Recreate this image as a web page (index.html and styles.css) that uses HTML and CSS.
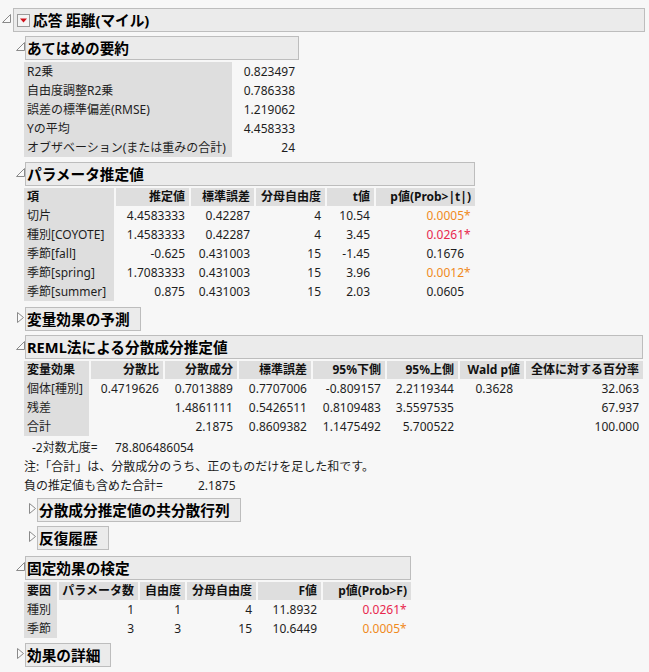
FILE: index.html
```html
<!DOCTYPE html>
<html lang="ja">
<head>
<meta charset="utf-8">
<title>応答 距離(マイル)</title>
<link rel="stylesheet" href="styles.css">
</head>
<body>
<div class="report">
  <section class="node root">
    <span class="tri tri-root"><svg width="9" height="9" viewBox="0 0 9 9"><path d="M0.5 8.5 L8.5 0.5 L8.5 8.5 Z" fill="#fafafa" stroke="#8a8a8a"/></svg></span>
    <div class="title root-title"><span class="menu"><svg width="13" height="13" viewBox="0 0 13 13"><rect x="0.5" y="0.5" width="12" height="12" fill="#f4f4f4" stroke="#9a9a9a"/><path d="M3 4.5 L10 4.5 L6.5 8.5 Z" fill="#d0101a"/></svg></span>応答 距離(マイル)</div>
    <div class="body">

      <section class="node mt4">
        <span class="tri"><svg width="9" height="9" viewBox="0 0 9 9"><path d="M0.5 8.5 L8.5 0.5 L8.5 8.5 Z" fill="#fafafa" stroke="#8a8a8a"/></svg></span>
        <div class="title">あてはめの要約</div>
        <div class="body">
          <div class="grid summary">
            <div class="lab">R2乗</div><div class="num">0.823497</div>
            <div class="lab">自由度調整R2乗</div><div class="num">0.786338</div>
            <div class="lab">誤差の標準偏差(RMSE)</div><div class="num">1.219062</div>
            <div class="lab">Yの平均</div><div class="num">4.458333</div>
            <div class="lab">オブザベーション(または重みの合計)</div><div class="num">24</div>
          </div>
        </div>
      </section>

      <section class="node mt5">
        <span class="tri"><svg width="9" height="9" viewBox="0 0 9 9"><path d="M0.5 8.5 L8.5 0.5 L8.5 8.5 Z" fill="#fafafa" stroke="#8a8a8a"/></svg></span>
        <div class="title">パラメータ推定値</div>
        <div class="body">
          <div class="grid param">
            <div class="hd left">項</div><div class="hd">推定値</div><div class="hd">標準誤差</div><div class="hd">分母自由度</div><div class="hd">t値</div><div class="hd">p値(Prob&gt;|t|)</div>
            <div class="lab">切片</div><div class="num">4.4583333</div><div class="num">0.42287</div><div class="num">4</div><div class="num">10.54</div><div class="num pv orange">0.0005<span class="star">*</span></div>
            <div class="lab">種別[COYOTE]</div><div class="num">1.4583333</div><div class="num">0.42287</div><div class="num">4</div><div class="num">3.45</div><div class="num pv red">0.0261<span class="star">*</span></div>
            <div class="lab">季節[fall]</div><div class="num">-0.625</div><div class="num">0.431003</div><div class="num">15</div><div class="num">-1.45</div><div class="num pv">0.1676<span class="star"></span></div>
            <div class="lab">季節[spring]</div><div class="num">1.7083333</div><div class="num">0.431003</div><div class="num">15</div><div class="num">3.96</div><div class="num pv orange">0.0012<span class="star">*</span></div>
            <div class="lab">季節[summer]</div><div class="num">0.875</div><div class="num">0.431003</div><div class="num">15</div><div class="num">2.03</div><div class="num pv">0.0605<span class="star"></span></div>
          </div>
        </div>
      </section>

      <section class="node mt6">
        <span class="tri tri-closed"><svg width="7" height="11" viewBox="0 0 7 11"><path d="M0.5 0.5 L6.5 5.5 L0.5 10.5 Z" fill="#fafafa" stroke="#8a8a8a"/></svg></span>
        <div class="title">変量効果の予測</div>
      </section>

      <section class="node mt4">
        <span class="tri"><svg width="9" height="9" viewBox="0 0 9 9"><path d="M0.5 8.5 L8.5 0.5 L8.5 8.5 Z" fill="#fafafa" stroke="#8a8a8a"/></svg></span>
        <div class="title">REML法による分散成分推定値</div>
        <div class="body">
          <div class="grid reml">
            <div class="hd left">変量効果</div><div class="hd">分散比</div><div class="hd">分散成分</div><div class="hd">標準誤差</div><div class="hd">95%下側</div><div class="hd">95%上側</div><div class="hd">Wald p値</div><div class="hd">全体に対する百分率</div>
            <div class="lab">個体[種別]</div><div class="num">0.4719626</div><div class="num">0.7013889</div><div class="num">0.7707006</div><div class="num">-0.809157</div><div class="num">2.2119344</div><div class="num pv">0.3628<span class="star"></span></div><div class="num">32.063</div>
            <div class="lab">残差</div><div class="num"></div><div class="num">1.4861111</div><div class="num">0.5426511</div><div class="num">0.8109483</div><div class="num">3.5597535</div><div class="num"></div><div class="num">67.937</div>
            <div class="lab">合計</div><div class="num"></div><div class="num">2.1875</div><div class="num">0.8609382</div><div class="num">1.1475492</div><div class="num">5.700522</div><div class="num"></div><div class="num">100.000</div>
          </div>
          <div class="line loglik"><span class="ll-label">-2対数尤度=</span><span>78.806486054</span></div>
          <div class="line">注:「合計」は、分散成分のうち、正のものだけを足した和です。</div>
          <div class="line"><span class="neg-label">負の推定値も含めた合計=</span><span>2.1875</span></div>

          <section class="node mt3">
            <span class="tri tri-closed"><svg width="7" height="11" viewBox="0 0 7 11"><path d="M0.5 0.5 L6.5 5.5 L0.5 10.5 Z" fill="#fafafa" stroke="#8a8a8a"/></svg></span>
            <div class="title">分散成分推定値の共分散行列</div>
          </section>
          <section class="node mt4">
            <span class="tri tri-closed"><svg width="7" height="11" viewBox="0 0 7 11"><path d="M0.5 0.5 L6.5 5.5 L0.5 10.5 Z" fill="#fafafa" stroke="#8a8a8a"/></svg></span>
            <div class="title">反復履歴</div>
          </section>
        </div>
      </section>

      <section class="node mt6">
        <span class="tri"><svg width="9" height="9" viewBox="0 0 9 9"><path d="M0.5 8.5 L8.5 0.5 L8.5 8.5 Z" fill="#fafafa" stroke="#8a8a8a"/></svg></span>
        <div class="title">固定効果の検定</div>
        <div class="body">
          <div class="grid fixed">
            <div class="hd left">要因</div><div class="hd">パラメータ数</div><div class="hd">自由度</div><div class="hd">分母自由度</div><div class="hd">F値</div><div class="hd">p値(Prob&gt;F)</div>
            <div class="lab">種別</div><div class="num">1</div><div class="num">1</div><div class="num">4</div><div class="num">11.8932</div><div class="num pv red">0.0261<span class="star">*</span></div>
            <div class="lab">季節</div><div class="num">3</div><div class="num">3</div><div class="num">15</div><div class="num">10.6449</div><div class="num pv orange">0.0005<span class="star">*</span></div>
          </div>
        </div>
      </section>

      <section class="node mt5">
        <span class="tri tri-closed"><svg width="7" height="11" viewBox="0 0 7 11"><path d="M0.5 0.5 L6.5 5.5 L0.5 10.5 Z" fill="#fafafa" stroke="#8a8a8a"/></svg></span>
        <div class="title">効果の詳細</div>
      </section>

    </div>
  </section>
</div>
</body>
</html>
```

FILE: styles.css
```css
html, body {
  margin: 0;
  background: #f7f7f7;
}
body {
  font-family: "Noto Sans", "Noto Sans CJK JP", sans-serif;
  font-size: 12px;
  color: #1e1e1e;
}
.report {
  padding-top: 8px;
}
.node {
  display: grid;
  grid-template-columns: 13px max-content;
  align-items: start;
}
.root {
  grid-template-columns: 13px 632px;
}
.mt3 { margin-top: 3px; }
.mt4 { margin-top: 4px; }
.mt5 { margin-top: 5px; }
.mt6 { margin-top: 6px; }

.tri {
  grid-column: 1;
  grid-row: 1;
  display: flex;
  padding-left: 4px;
  padding-top: 6px;
}
.tri-root {
  padding-left: 2px;
}
.tri-closed {
  padding-left: 5px;
  padding-top: 5px;
}
.tri svg { display: block; }

.title {
  grid-column: 2;
  grid-row: 1;
  height: 24px;
  box-sizing: border-box;
  border: 1px solid #bdbdbd;
  background: #ebebeb;
  font-weight: bold;
  font-size: 14.67px;
  line-height: 22px;
  padding: 0 10px 0 1px;
  white-space: nowrap;
  color: #000;
  display: flex;
  align-items: center;
}
.root-title {
  padding-left: 3px;
}
.menu {
  display: flex;
  margin-right: 3px;
}
.menu svg { display: block; }

.body {
  grid-column: 2;
  grid-row: 2;
  margin-left: -1px;
}

.grid {
  display: grid;
  margin-top: 2px;
  column-gap: 2px;
  white-space: nowrap;
}
.summary {
  grid-template-columns: 208px 67px;
  column-gap: 0;
}
.param {
  grid-template-columns: 90px 73px 63px 69px 47px 99px;
}
.reml {
  grid-template-columns: 65px 72px 72px 72px 72px 71px 64px 117px;
}
.fixed {
  grid-template-columns: 33px 79px 45px 69px 63px 88px;
}

.hd {
  background: #dedede;
  font-weight: bold;
  line-height: 18px;
  height: 18px;
  text-align: right;
  padding-right: 4px;
  color: #111;
}
.hd.left {
  text-align: left;
  padding: 0 0 0 3px;
}
.lab {
  background: #dedede;
  line-height: 19px;
  height: 19px;
  padding-left: 3px;
}
.num {
  line-height: 19px;
  height: 19px;
  text-align: right;
  padding-right: 4px;
}
.star {
  display: inline-block;
  width: 7px;
  text-align: left;
}
.orange { color: #f08a1c; }
.red { color: #e8284e; }

.line {
  line-height: 19px;
  height: 19px;
  white-space: nowrap;
}
.loglik {
  margin-top: 2px;
  padding-left: 8px;
}
.ll-label {
  display: inline-block;
  width: 83px;
}
.neg-label {
  display: inline-block;
  width: 174px;
}
```
